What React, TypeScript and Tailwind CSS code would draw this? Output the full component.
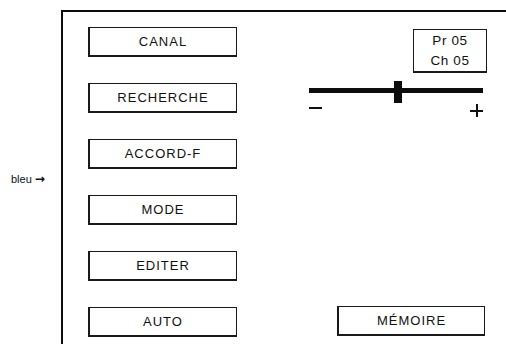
import React from "react";

const buttons = ["CANAL", "RECHERCHE", "ACCORD-F", "MODE", "EDITER", "AUTO"];

function MenuButton({ label, className = "" }: { label: string; className?: string }) {
  return (
    <div
      className={`flex h-[30px] items-center justify-center border border-b-2 border-l-2 border-[#1a1a1a] text-[13px] tracking-[1px] text-[#111] ${className}`}
    >
      {label}
    </div>
  );
}

function Slider({ value }: { value: number }) {
  return (
    <div className="flex flex-col">
      <div className="relative h-[22px]">
        <div className="absolute left-0 right-[2px] top-[7px] h-[5px] bg-[#0d0d0d]" />
        <div
          className="absolute top-0 h-[22px] w-[8px] bg-[#0d0d0d]"
          style={{ left: `${value}%` }}
        />
      </div>
      <div className="flex items-start justify-between pr-[2px]">
        <span className="mt-[4px] block h-[2px] w-[13px] bg-[#111]" />
        {/* plus sign */}
        <span className="relative mt-[1px] block h-[13px] w-[13px]">
          <span className="absolute left-0 top-[6px] h-[1.5px] w-[13px] bg-[#111]" />
          <span className="absolute left-[6px] top-0 h-[13px] w-[1.5px] bg-[#111]" />
        </span>
      </div>
    </div>
  );
}

export default function App() {
  return (
    <div
      className="flex h-[344px] w-[506px] bg-white text-[#111]"
      style={{ fontFamily: '"Liberation Sans", Arial, sans-serif' }}
    >
      {/* label column */}
      <div className="flex w-[61px] shrink-0 flex-col pt-[171px] pl-[11px]">
        <span className="flex items-center gap-[3px] text-[11px] leading-[16px] whitespace-nowrap">
          bleu
          <span className="text-[12px] font-bold" style={{ fontFamily: '"DejaVu Sans", sans-serif' }}>
            →
          </span>
        </span>
      </div>

      {/* frame */}
      <div className="mt-[10px] flex flex-1 border-t-2 border-l-2 border-[#0d0d0d]">
        <div className="flex w-[175px] flex-col gap-[26px] pt-[15px] pl-[25px]">
          {buttons.map((b) => (
            <MenuButton key={b} label={b} className="w-[149px]" />
          ))}
        </div>

        <div className="ml-[71px] flex w-[178px] flex-col pt-[17px] pb-[8px]">
          <div className="ml-auto flex h-[44px] w-[74px] flex-col items-center justify-center border border-b-2 border-[#1a1a1a] text-[13.5px] leading-[20px] tracking-[0.6px]">
            <span>Pr 05</span>
            <span>Ch 05</span>
          </div>
          <div className="mt-[8px] w-[176px]">
            <Slider value={48.5} />
          </div>
          <MenuButton label="MÉMOIRE" className="mt-auto ml-[28px] w-[148px]" />
        </div>
      </div>
    </div>
  );
}
